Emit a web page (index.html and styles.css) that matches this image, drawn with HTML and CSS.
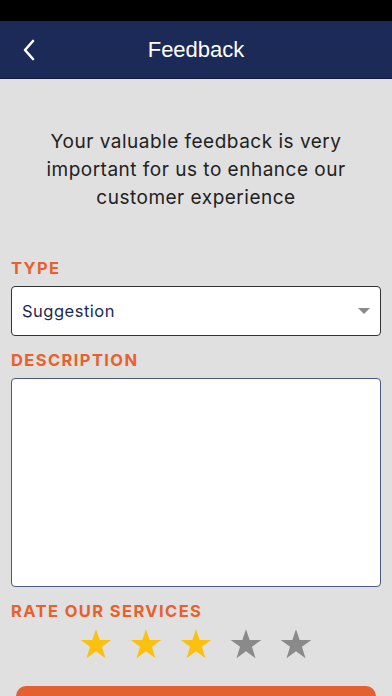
FILE: index.html
```html
<!DOCTYPE html>
<html lang="en">
<head>
    <meta charset="UTF-8">
    <meta name="viewport" content="width=device-width, initial-scale=1.0">
    <title>Feedback</title>
    <link rel="stylesheet" href="styles.css">
</head>
<body>
    <div class="statusbar"></div>
    <div class="navbar">
        <svg class="back" width="14" height="22" viewBox="0 0 14 22">
            <path d="M11 2 L3 11 L11 20" fill="none" stroke="#fff" stroke-width="2.6" stroke-linecap="round" stroke-linejoin="round"/>
        </svg>
        <div class="title">Feedback</div>
    </div>
    <div class="content">
        <p class="intro">Your valuable feedback is very important for us to enhance our customer experience</p>

        <div class="label">TYPE</div>
        <div class="select">
            <span>Suggestion</span>
            <svg width="12" height="7" viewBox="0 0 12 7"><path d="M0 0 H12 L6 6 Z" fill="#8a8a8a"/></svg>
        </div>

        <div class="label">DESCRIPTION</div>
        <div class="textarea"></div>

        <div class="label">RATE OUR SERVICES</div>
        <div class="stars">
            <svg class="star on" viewBox="0 0 24 24"><path d="M12 1.5 L14.6 9.2 H22.8 L16.2 14 L18.7 22 L12 17.1 L5.3 22 L7.8 14 L1.2 9.2 H9.4 Z"/></svg>
            <svg class="star on" viewBox="0 0 24 24"><path d="M12 1.5 L14.6 9.2 H22.8 L16.2 14 L18.7 22 L12 17.1 L5.3 22 L7.8 14 L1.2 9.2 H9.4 Z"/></svg>
            <svg class="star on" viewBox="0 0 24 24"><path d="M12 1.5 L14.6 9.2 H22.8 L16.2 14 L18.7 22 L12 17.1 L5.3 22 L7.8 14 L1.2 9.2 H9.4 Z"/></svg>
            <svg class="star" viewBox="0 0 24 24"><path d="M12 1.5 L14.6 9.2 H22.8 L16.2 14 L18.7 22 L12 17.1 L5.3 22 L7.8 14 L1.2 9.2 H9.4 Z"/></svg>
            <svg class="star" viewBox="0 0 24 24"><path d="M12 1.5 L14.6 9.2 H22.8 L16.2 14 L18.7 22 L12 17.1 L5.3 22 L7.8 14 L1.2 9.2 H9.4 Z"/></svg>
        </div>

        <div class="submit"></div>
    </div>
</body>
</html>
```

FILE: styles.css
```css
body {
    margin: 0;
    padding: 0;
    background-color: #e0e0e0;
    font-family: "Inter", "Liberation Sans", sans-serif;
    height: 696px;
    overflow: hidden;
}
.statusbar {
    height: 21px;
    background-color: #000;
}
.navbar {
    height: 57px;
    background-color: #1b2a57;
    border-bottom: 1px solid #0f1a3c;
    display: flex;
    align-items: center;
    justify-content: center;
    position: relative;
}
.back {
    position: absolute;
    left: 22px;
    top: 18px;
}
.title {
    color: #fff;
    font-size: 22px;
    font-family: "Liberation Sans", sans-serif;
}
.content {
    padding: 0 11px;
}
.intro {
    margin: 49px 18px 46px;
    text-align: center;
    font-size: 19px;
    line-height: 28px;
    color: #222;
    letter-spacing: 0.5px;
}
.label {
    color: #e8602c;
    font-weight: 700;
    font-size: 16.5px;
    letter-spacing: 1.4px;
    line-height: 20px;
    margin-bottom: 8px;
}
.select {
    height: 48px;
    background-color: #fff;
    border: 1px solid #333;
    border-radius: 4px;
    display: flex;
    align-items: center;
    justify-content: space-between;
    padding: 0 10px 0 10px;
    margin-bottom: 14px;
}
.select span {
    color: #1b2a57;
    font-size: 16.5px;
    letter-spacing: 0.5px;
}
.textarea {
    height: 207px;
    background-color: #fff;
    border: 1px solid #4a5a85;
    border-radius: 4px;
    margin-bottom: 14px;
}
.stars {
    display: flex;
    justify-content: center;
    gap: 16px;
    margin-top: -2px;
}
.star {
    width: 34px;
    height: 34px;
    fill: #8a8a8a;
}
.star.on {
    fill: #fcc10f;
}
.submit {
    margin: 25px 5px 0;
    height: 10px;
    background-color: #e46030;
    border-radius: 25px 25px 0 0;
}
```
